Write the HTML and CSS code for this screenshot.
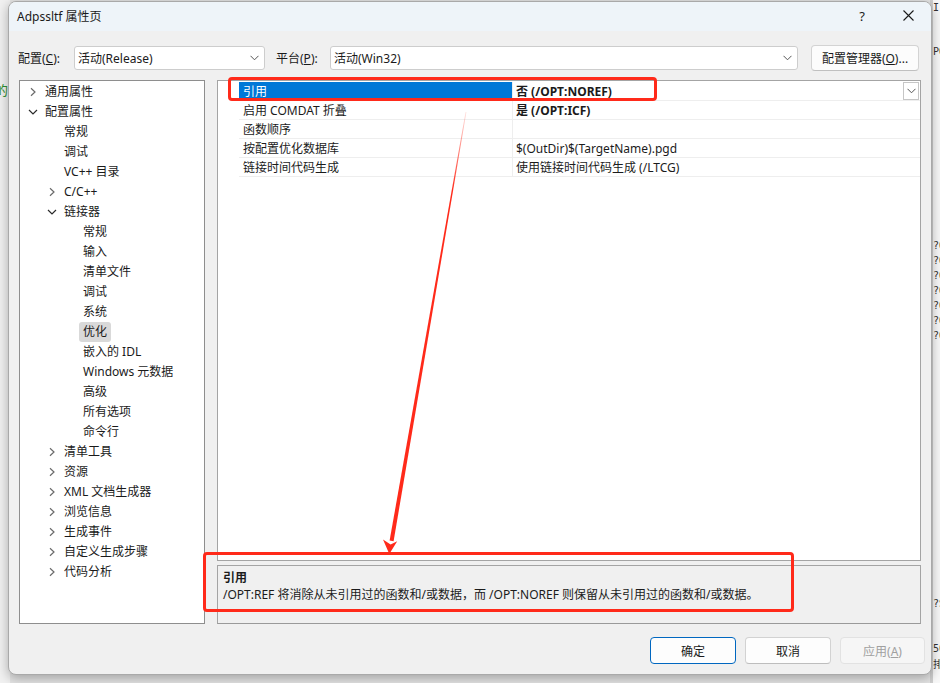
FILE: index.html
```html
<!DOCTYPE html>
<html lang="zh-CN">
<head>
<meta charset="utf-8">
<title>Adpssltf 属性页</title>
<link rel="stylesheet" href="styles.css">
</head>
<body>
<div class="desktop">
  <div class="bg-left"><span class="bg-glyph">的</span></div>
  <div class="bg-right">
    <span class="bg-code c1">Ir</span>
    <span class="bg-code c2">PO</span>
    <span class="bg-code c3">?O</span>
    <span class="bg-code c4">?O</span>
    <span class="bg-code c5">?O</span>
    <span class="bg-code c6">?O</span>
    <span class="bg-code c7">?O</span>
    <span class="bg-code c8">?O</span>
    <span class="bg-code c9">?O</span>
    <span class="bg-code c10">?S</span>
    <span class="bg-code c11">50</span>
    <span class="bg-code c12">排</span>
  </div>

  <div class="window">
    <div class="titlebar">
      <span class="title">Adpssltf 属性页</span>
      <div class="title-actions">
        <span class="tbtn help">?</span>
        <span class="tbtn close"><svg width="11" height="11" viewBox="0 0 11 11"><path d="M0.5 0.5 L10.5 10.5 M10.5 0.5 L0.5 10.5" stroke="#1a1a1a" stroke-width="1.1" fill="none"/></svg></span>
      </div>
    </div>

    <div class="toolbar">
      <label class="lbl lbl-config">配置(<u>C</u>):</label>
      <div class="combo combo-config"><span>活动(Release)</span><svg class="chev" width="9" height="6" viewBox="0 0 9 6"><path d="M0.5 0.8 L4.5 4.8 L8.5 0.8" stroke="#555" stroke-width="1" fill="none"/></svg></div>
      <label class="lbl lbl-platform">平台(<u>P</u>):</label>
      <div class="combo combo-platform"><span>活动(Win32)</span><svg class="chev" width="9" height="6" viewBox="0 0 9 6"><path d="M0.5 0.8 L4.5 4.8 L8.5 0.8" stroke="#555" stroke-width="1" fill="none"/></svg></div>
      <button class="btn btn-manager">配置管理器(<u>O</u>)...</button>
    </div>

    <div class="main">
      <div class="tree">
        <div class="node l0"><span class="tw"><svg width="10" height="10" viewBox="0 0 10 10"><path d="M3 1.2 L7 5 L3 8.8" stroke="#6b6b6b" stroke-width="1.2" fill="none"/></svg></span><span class="lab">通用属性</span></div>
        <div class="node l0"><span class="tw"><svg width="10" height="10" viewBox="0 0 10 10"><path d="M1 3 L5 7 L9 3" stroke="#2b2b2b" stroke-width="1.2" fill="none"/></svg></span><span class="lab">配置属性</span></div>
        <div class="node l1"><span class="tw"></span><span class="lab">常规</span></div>
        <div class="node l1"><span class="tw"></span><span class="lab">调试</span></div>
        <div class="node l1"><span class="tw"></span><span class="lab">VC++ 目录</span></div>
        <div class="node l1"><span class="tw"><svg width="10" height="10" viewBox="0 0 10 10"><path d="M3 1.2 L7 5 L3 8.8" stroke="#6b6b6b" stroke-width="1.2" fill="none"/></svg></span><span class="lab">C/C++</span></div>
        <div class="node l1"><span class="tw"><svg width="10" height="10" viewBox="0 0 10 10"><path d="M1 3 L5 7 L9 3" stroke="#2b2b2b" stroke-width="1.2" fill="none"/></svg></span><span class="lab">链接器</span></div>
        <div class="node l2"><span class="tw"></span><span class="lab">常规</span></div>
        <div class="node l2"><span class="tw"></span><span class="lab">输入</span></div>
        <div class="node l2"><span class="tw"></span><span class="lab">清单文件</span></div>
        <div class="node l2"><span class="tw"></span><span class="lab">调试</span></div>
        <div class="node l2"><span class="tw"></span><span class="lab">系统</span></div>
        <div class="node l2"><span class="tw"></span><span class="lab sel">优化</span></div>
        <div class="node l2"><span class="tw"></span><span class="lab">嵌入的 IDL</span></div>
        <div class="node l2"><span class="tw"></span><span class="lab">Windows 元数据</span></div>
        <div class="node l2"><span class="tw"></span><span class="lab">高级</span></div>
        <div class="node l2"><span class="tw"></span><span class="lab">所有选项</span></div>
        <div class="node l2"><span class="tw"></span><span class="lab">命令行</span></div>
        <div class="node l1"><span class="tw"><svg width="10" height="10" viewBox="0 0 10 10"><path d="M3 1.2 L7 5 L3 8.8" stroke="#6b6b6b" stroke-width="1.2" fill="none"/></svg></span><span class="lab">清单工具</span></div>
        <div class="node l1"><span class="tw"><svg width="10" height="10" viewBox="0 0 10 10"><path d="M3 1.2 L7 5 L3 8.8" stroke="#6b6b6b" stroke-width="1.2" fill="none"/></svg></span><span class="lab">资源</span></div>
        <div class="node l1"><span class="tw"><svg width="10" height="10" viewBox="0 0 10 10"><path d="M3 1.2 L7 5 L3 8.8" stroke="#6b6b6b" stroke-width="1.2" fill="none"/></svg></span><span class="lab">XML 文档生成器</span></div>
        <div class="node l1"><span class="tw"><svg width="10" height="10" viewBox="0 0 10 10"><path d="M3 1.2 L7 5 L3 8.8" stroke="#6b6b6b" stroke-width="1.2" fill="none"/></svg></span><span class="lab">浏览信息</span></div>
        <div class="node l1"><span class="tw"><svg width="10" height="10" viewBox="0 0 10 10"><path d="M3 1.2 L7 5 L3 8.8" stroke="#6b6b6b" stroke-width="1.2" fill="none"/></svg></span><span class="lab">生成事件</span></div>
        <div class="node l1"><span class="tw"><svg width="10" height="10" viewBox="0 0 10 10"><path d="M3 1.2 L7 5 L3 8.8" stroke="#6b6b6b" stroke-width="1.2" fill="none"/></svg></span><span class="lab">自定义生成步骤</span></div>
        <div class="node l1"><span class="tw"><svg width="10" height="10" viewBox="0 0 10 10"><path d="M3 1.2 L7 5 L3 8.8" stroke="#6b6b6b" stroke-width="1.2" fill="none"/></svg></span><span class="lab">代码分析</span></div>
      </div>

      <div class="right">
        <div class="grid">
          <div class="prow selected">
            <div class="gutter"></div>
            <div class="pname">引用</div>
            <div class="pval bold"><span>否 (/OPT:NOREF)</span><span class="dd"><svg width="9" height="6" viewBox="0 0 9 6"><path d="M0.5 0.8 L4.5 4.8 L8.5 0.8" stroke="#555" stroke-width="1" fill="none"/></svg></span></div>
          </div>
          <div class="prow">
            <div class="gutter"></div>
            <div class="pname">启用 COMDAT 折叠</div>
            <div class="pval bold">是 (/OPT:ICF)</div>
          </div>
          <div class="prow">
            <div class="gutter"></div>
            <div class="pname">函数顺序</div>
            <div class="pval"></div>
          </div>
          <div class="prow">
            <div class="gutter"></div>
            <div class="pname">按配置优化数据库</div>
            <div class="pval">$(OutDir)$(TargetName).pgd</div>
          </div>
          <div class="prow">
            <div class="gutter"></div>
            <div class="pname">链接时间代码生成</div>
            <div class="pval">使用链接时间代码生成 (/LTCG)</div>
          </div>
        </div>
        <div class="desc">
          <div class="desc-title">引用</div>
          <div class="desc-text">/OPT:REF 将消除从未引用过的函数和/或数据，而 /OPT:NOREF 则保留从未引用过的函数和/或数据。</div>
        </div>
      </div>
    </div>

    <div class="footer">
      <button class="btn-dlg btn-ok">确定</button>
      <button class="btn-dlg btn-cancel">取消</button>
      <button class="btn-dlg btn-apply">应用(<u>A</u>)</button>
    </div>
  </div>

  <div class="anno anno-box1"></div>
  <div class="anno anno-box2"></div>
  <svg class="anno-arrow" width="940" height="683" viewBox="0 0 940 683">
    <defs>
      <linearGradient id="fade" gradientUnits="userSpaceOnUse" x1="466" y1="112" x2="390" y2="550">
        <stop offset="0" stop-color="#ff2a1a" stop-opacity="0.15"/>
        <stop offset="0.18" stop-color="#ff2a1a" stop-opacity="1"/>
        <stop offset="1" stop-color="#ff2a1a" stop-opacity="1"/>
      </linearGradient>
    </defs>
    <polygon points="466.4,112 393.6,541.3 389.6,540.6 465.6,111.9" fill="url(#fade)"/>
    <polygon points="389.3,554 383,539.5 390.6,544.5 397.2,541.2" fill="#ff2a1a"/>
  </svg>
</div>
</body>
</html>
```

FILE: styles.css
```css
* {
  box-sizing: border-box;
}

html,
body {
  margin: 0;
  padding: 0;
}

body {
  width: 940px;
  height: 683px;
  overflow: hidden;
  font-family: "Noto Sans", "Noto Sans CJK SC", sans-serif;
  font-size: 12px;
  color: #1b1b1b;
}

.desktop {
  position: relative;
  width: 940px;
  height: 683px;
  background: #e4e4e4;
  overflow: hidden;
}

/* background application behind the dialog */
.bg-left {
  position: absolute;
  left: 0;
  top: 0;
  width: 10px;
  height: 683px;
  background: #f1f1f1;
  overflow: hidden;
}

.bg-glyph {
  position: absolute;
  left: -5px;
  top: 83px;
  font-size: 13px;
  line-height: 14px;
  color: #2f8f2f;
}

.bg-right {
  position: absolute;
  left: 930px;
  top: 0;
  width: 10px;
  height: 683px;
  background: #f8f8f8;
  border-left: 3px solid #cfcfcf;
  overflow: hidden;
}

.bg-code {
  position: absolute;
  left: 0;
  font-family: "DejaVu Sans Mono", monospace;
  font-size: 10px;
  line-height: 11px;
  white-space: nowrap;
  color: #333;
}

.c1 { top: 2px; }
.c2 { top: 46px; }
.c3 { top: 240px; }
.c4 { top: 255px; }
.c5 { top: 270px; }
.c6 { top: 285px; }
.c7 { top: 300px; }
.c8 { top: 315px; }
.c9 { top: 330px; }
.c10 { top: 598px; }
.c11 { top: 643px; }
.c12 { top: 658px; font-family: "Noto Sans CJK SC", sans-serif; }

/* dialog window */
.window {
  position: absolute;
  left: 8px;
  top: 1px;
  width: 924px;
  height: 674px;
  border: 1px solid #a9a9a9;
  border-radius: 8px;
  background: #f0f0f0;
  box-shadow: 0 3px 12px rgba(0, 0, 0, 0.3);
  overflow: hidden;
  display: flex;
  flex-direction: column;
}

.titlebar {
  height: 29px;
  flex: none;
  background: #eef4f9;
  display: flex;
  align-items: center;
  padding-left: 8px;
  padding-bottom: 2px;
}

.title {
  color: #1a1a1a;
}

.title-actions {
  margin-left: auto;
  display: flex;
  align-items: center;
  height: 100%;
}

.tbtn {
  width: 46px;
  height: 100%;
  display: flex;
  align-items: center;
  justify-content: center;
}

.help {
  font-size: 13px;
  color: #1a1a1a;
}

.toolbar {
  margin-top: 14px;
  height: 26px;
  flex: none;
  display: flex;
  align-items: center;
  padding: 0 12px 0 9px;
}

.lbl {
  flex: none;
  color: #1a1a1a;
}

.lbl-config {
  width: 56px;
}

.lbl-platform {
  width: 54px;
  margin-left: 11px;
}

.combo {
  flex: none;
  height: 24px;
  border: 1px solid #cdcdcd;
  border-radius: 3px;
  background: #ffffff;
  display: flex;
  align-items: center;
  padding-left: 3px;
  padding-right: 5px;
}

.combo .chev {
  margin-left: auto;
}

.combo-config {
  width: 191px;
}

.combo-platform {
  width: 468px;
}

.btn {
  font-family: inherit;
  font-size: 12px;
  color: #1a1a1a;
}

.btn-manager {
  flex: none;
  margin-left: 13px;
  width: 108px;
  height: 26px;
  border: 1px solid #d3d3d3;
  border-bottom-color: #c0c0c0;
  border-radius: 4px;
  background: #fcfcfc;
  padding: 0;
}

.main {
  margin-top: 9px;
  height: 544px;
  flex: none;
  display: flex;
  gap: 12px;
  padding: 0 10px;
}

/* tree */
.tree {
  width: 186px;
  flex: none;
  border: 1px solid #8e8e8e;
  background: #ffffff;
  padding-top: 1px;
  overflow: hidden;
}

.node {
  height: 20px;
  display: flex;
  align-items: center;
  color: #1a1a1a;
}

.node.l0 {
  padding-left: 8px;
}

.node.l1 {
  padding-left: 27px;
}

.node.l2 {
  padding-left: 46px;
}

.tw {
  width: 10px;
  height: 10px;
  flex: none;
  margin-right: 7px;
  display: flex;
}

.lab {
  line-height: 20px;
  white-space: nowrap;
}

.lab.sel {
  background: #d9d9d9;
  border-radius: 3px;
  padding: 0 4px;
  margin-left: -4px;
}

/* right column */
.right {
  flex: 1;
  display: flex;
  flex-direction: column;
  gap: 4px;
}

.grid {
  height: 481px;
  flex: none;
  border: 1px solid #a4a4a4;
  background: #ffffff;
  padding-top: 1px;
}

.prow {
  display: flex;
  height: 19px;
}

.gutter {
  width: 21px;
  flex: none;
}

.pname {
  width: 273px;
  flex: none;
  border-bottom: 1px solid #eeeeee;
  padding: 1px 0 0 4px;
  line-height: 17px;
  white-space: nowrap;
}

.pval {
  flex: 1;
  border-left: 1px solid #eeeeee;
  border-bottom: 1px solid #eeeeee;
  padding: 1px 0 0 3px;
  line-height: 17px;
  display: flex;
  white-space: nowrap;
}

.pval.bold {
  font-weight: 700;
}

.prow.selected .pname {
  background: #0078d7;
  color: #ffffff;
}

.dd {
  margin-left: auto;
  margin-right: 1px;
  margin-top: -1px;
  width: 16px;
  height: 18px;
  border: 1px solid #c6c6c6;
  background: #ffffff;
  display: flex;
  align-items: center;
  justify-content: center;
}

.desc {
  flex: 1;
  border: 1px solid #a4a4a4;
  border-bottom-color: #9a9a9a;
  background: #f0f0f0;
  padding: 3px 5px 0;
}

.desc-title {
  font-weight: 700;
  line-height: 17px;
}

.desc-text {
  line-height: 17px;
  white-space: nowrap;
}

/* footer buttons */
.footer {
  margin-top: 13px;
  height: 27px;
  flex: none;
  display: flex;
  justify-content: flex-end;
  gap: 9px;
  padding-right: 6px;
}

.btn-dlg {
  width: 86px;
  height: 27px;
  border-radius: 4px;
  font-family: inherit;
  font-size: 12px;
  color: #1a1a1a;
  padding: 0;
}

.btn-ok {
  border: 1px solid #0067c0;
  background: #fdfdfd;
}

.btn-cancel {
  border: 1px solid #d2d2d2;
  border-bottom-color: #bdbdbd;
  background: #fdfdfd;
}

.btn-apply {
  width: 85px;
  border: 1px solid #e2e2e2;
  background: #f6f6f6;
  color: #a0a0a0;
}

/* red annotations drawn over the screenshot */
.anno {
  position: absolute;
  border: 3px solid #ff2a1a;
  border-radius: 4px;
  pointer-events: none;
}

.anno-box1 {
  left: 228px;
  top: 77px;
  width: 429px;
  height: 24px;
}

.anno-box2 {
  left: 203px;
  top: 552px;
  width: 591px;
  height: 60px;
}

.anno-arrow {
  position: absolute;
  left: 0;
  top: 0;
  pointer-events: none;
}
```
